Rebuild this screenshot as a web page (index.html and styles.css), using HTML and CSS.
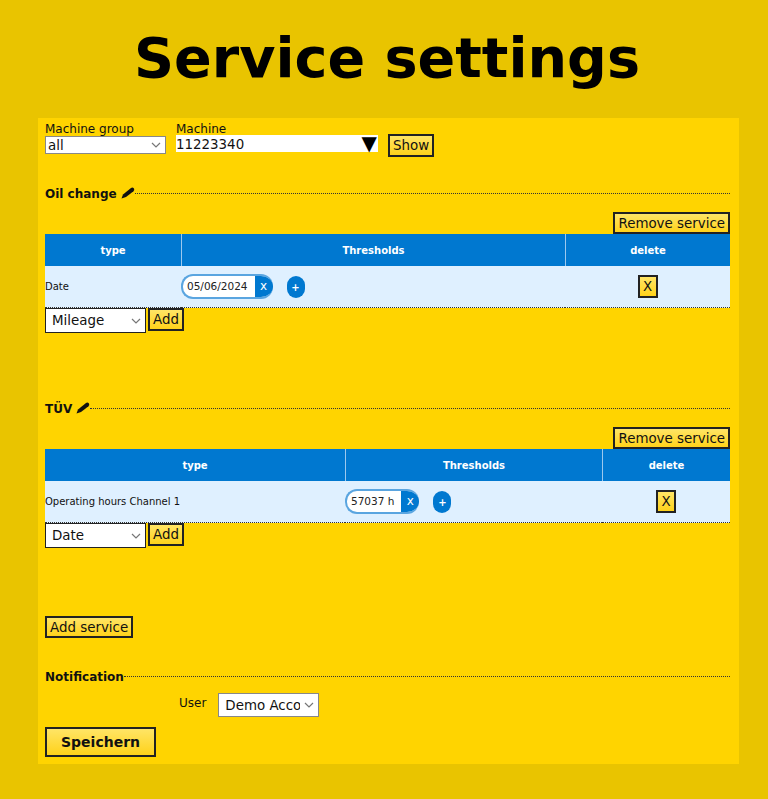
FILE: index.html
```html
<!DOCTYPE html>
<html lang="en">
  <head>
    <meta charset="utf-8" />
    <title>Service settings</title>
    <link rel="stylesheet" href="styles.css">
  </head>
  <body>
    <h1 class="title">Service settings</h1>
    <div class="panel">
      <div class="filter">
        <div class="field">
          <label for="group">Machine group</label>
          <select id="group" class="group-select"><option>all</option></select>
        </div>
        <div class="field">
          <label>Machine</label>
          <div class="combo"><span>11223340</span><span class="combo-arrow">▼</span></div>
        </div>
        <button class="btn show-btn">Show</button>
      </div>

      <div class="service oil">
        <div class="section-head">
          <span class="name">Oil change</span>
          <svg class="pen" viewBox="0 0 14 12"><path d="M0.5 11.5 L2 7.5 L10 1 Q11.5 0 13 1.5 Q13.8 3 12.5 4.2 L5 10 Z"/></svg>
          <span class="rule"></span>
        </div>
        <div class="remove-row"><button class="btn">Remove service</button></div>
        <table class="thresholds first">
          <tr><th class="c1">type</th><th class="c2">Thresholds</th><th>delete</th></tr>
          <tr>
            <td>Date</td>
            <td>
              <div class="chips">
                <span class="chip"><span class="chip-val">05/06/2024</span><span class="chip-x">x</span></span>
                <span class="chip-add">+</span>
              </div>
            </td>
            <td class="del"><button class="btn x-btn">X</button></td>
          </tr>
        </table>
        <div class="add-row">
          <select class="type-select"><option>Mileage</option></select>
          <button class="btn">Add</button>
        </div>
      </div>

      <div class="service tuv">
        <div class="section-head">
          <span class="name">TÜV</span>
          <svg class="pen" viewBox="0 0 14 12"><path d="M0.5 11.5 L2 7.5 L10 1 Q11.5 0 13 1.5 Q13.8 3 12.5 4.2 L5 10 Z"/></svg>
          <span class="rule"></span>
        </div>
        <div class="remove-row"><button class="btn">Remove service</button></div>
        <table class="thresholds second">
          <tr><th class="c1">type</th><th class="c2">Thresholds</th><th>delete</th></tr>
          <tr>
            <td>Operating hours Channel 1</td>
            <td>
              <div class="chips">
                <span class="chip"><span class="chip-val">57037 h</span><span class="chip-x">x</span></span>
                <span class="chip-add">+</span>
              </div>
            </td>
            <td class="del"><button class="btn x-btn">X</button></td>
          </tr>
        </table>
        <div class="add-row">
          <select class="type-select"><option>Date</option></select>
          <button class="btn">Add</button>
        </div>
      </div>

      <button class="btn add-service">Add service</button>

      <div class="section-head notify-head">
        <span class="name">Notification</span>
        <span class="rule"></span>
      </div>
      <div class="user-row">
        <label for="user">User</label>
        <select id="user" class="user-select"><option>Demo Account</option></select>
      </div>
      <button class="btn save">Speichern</button>
    </div>
  </body>
</html>
```

FILE: styles.css
```css
html {
  --blue: #0078d0;
  --chevron: url("data:image/svg+xml,%3Csvg xmlns='http://www.w3.org/2000/svg' width='10' height='6'%3E%3Cpath d='M1 1l4 4 4-4' fill='none' stroke='%23777' stroke-width='1.2'/%3E%3C/svg%3E");
}

body {
  margin: 0;
  background-color: #e9c400;
  font-family: "DejaVu Sans", sans-serif;
  color: #111;
}

.title {
  margin: 0;
  height: 118px;
  padding-left: 6px;
  line-height: 116px;
  text-align: center;
  font-size: 55.6px;
  font-weight: bold;
  color: #000;
}

.panel {
  margin: 0 29px 0 38px;
  height: 646px;
  box-sizing: border-box;
  padding: 5px 9px 0 7px;
  background-color: #ffd400;
}

.filter {
  display: flex;
  align-items: flex-start;
  gap: 10px;
  height: 62px;
}

.field {
  display: flex;
  flex-direction: column;
}

.field label {
  font-size: 12px;
  line-height: 13px;
}

select {
  appearance: none;
  font-family: inherit;
  font-size: 13.4px;
  color: #111;
  background: #fff var(--chevron) no-repeat right 4px center;
}

.group-select {
  width: 121px;
  height: 18px;
  padding: 0 0 0 2px;
  border: 1px solid #888;
}

.combo {
  display: flex;
  justify-content: space-between;
  width: 202px;
  height: 17px;
  margin-top: -1px;
  background-color: #fff;
  font-size: 13.4px;
  line-height: 19px;
}

.combo-arrow {
  margin-right: 1px;
  font-size: 20px;
  line-height: 17px;
  color: #000;
}

.btn {
  padding: 0 3px;
  font-family: inherit;
  font-size: 13.4px;
  color: #111;
  background: linear-gradient(#ffe566, #ffd21a);
  border: 2px solid #222;
}

.show-btn {
  height: 23px;
  margin-top: 11px;
}

.section-head {
  display: flex;
  align-items: center;
  font-size: 12px;
  font-weight: bold;
  height: 16px;
}

.name {
  padding-top: 2px;
}

.pen {
  width: 14px;
  height: 12px;
  margin-left: 4px;
  fill: #111;
}

.rule {
  flex: 1;
  border-top: 1px dotted #333;
}

.remove-row {
  display: flex;
  justify-content: flex-end;
  height: 22px;
  margin-top: 11px;
}

.remove-row .btn {
  height: 22px;
}

.thresholds {
  width: 685px;
  border-spacing: 0;
  table-layout: fixed;
  font-size: 10px;
}

.thresholds th {
  height: 32px;
  padding: 0;
  background-color: var(--blue);
  color: #fff;
  font-size: 10px;
}

.thresholds th + th {
  border-left: 1px solid #9cc8ee;
}

.thresholds td {
  height: 41px;
  padding: 0;
  background-color: #dff0ff;
  border-bottom: 1px dotted #333;
}

.first .c1 { width: 136px; }
.first .c2 { width: 383px; }
.second .c1 { width: 300px; }
.second .c2 { width: 256px; }

.chips {
  display: flex;
  align-items: center;
  gap: 14px;
}

.chip {
  display: inline-flex;
  height: 25px;
  border-radius: 12px;
  overflow: hidden;
  box-sizing: border-box;
  border: 2px solid #5aa5e0;
  border-right: 0;
  background-color: #fff;
  font-size: 10.5px;
}

.chip-val {
  padding: 0 7px 0 4px;
  line-height: 21px;
  color: #222;
}

.chip-x {
  width: 18px;
  background-color: var(--blue);
  color: #fff;
  font-size: 12px;
  line-height: 21px;
  text-align: center;
}

.chip-add {
  width: 18px;
  height: 22px;
  border-radius: 9px;
  background-color: var(--blue);
  color: #fff;
  font-size: 10px;
  font-weight: bold;
  line-height: 23px;
  text-align: center;
}

.del {
  text-align: center;
}

.x-btn {
  width: 20px;
  height: 23px;
  padding: 0;
  vertical-align: middle;
}

.add-row {
  display: flex;
  align-items: flex-start;
  gap: 2px;
}

.add-row .btn {
  height: 23px;
}

.type-select {
  width: 101px;
  height: 25px;
  padding: 0 0 0 6px;
  border: 1px solid #222;
}

.service.oil { height: 215px; }
.service.tuv { height: 216px; }

.add-service {
  display: block;
  height: 22px;
  margin-bottom: 30px;
}

.notify-head {
  margin-bottom: 9px;
}

.user-row {
  display: flex;
  align-items: flex-start;
  gap: 12px;
  height: 34px;
  padding-left: 134px;
}

.user-row label {
  font-size: 12px;
  line-height: 20px;
}

.user-select {
  width: 101px;
  height: 24px;
  padding: 0 18px 0 6px;
  border: 1px solid #888;
}

.save {
  display: block;
  width: 111px;
  height: 30px;
  font-size: 14px;
  font-weight: bold;
}
```
